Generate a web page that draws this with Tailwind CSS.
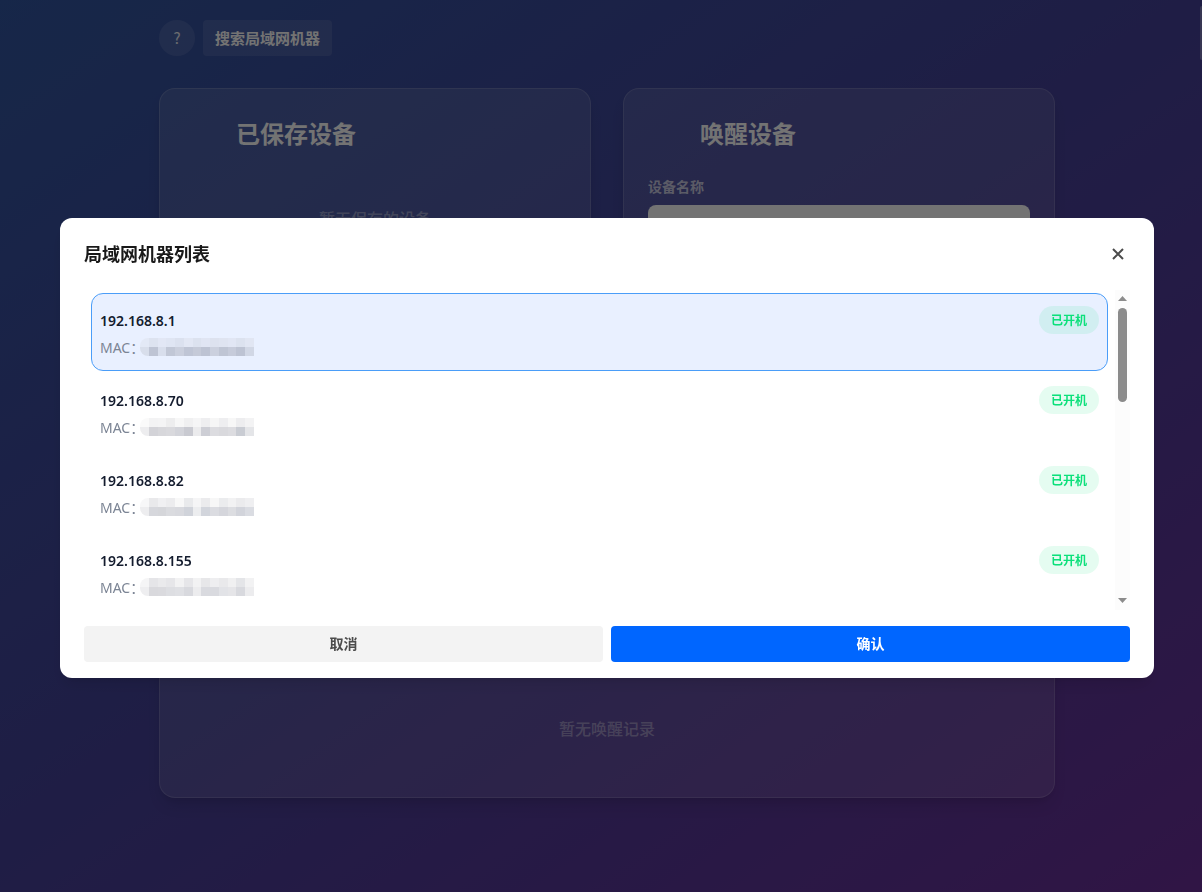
<!DOCTYPE html>
<html lang="zh-CN">
  <head>
    <meta charset="UTF-8" />
    <meta name="viewport" content="width=device-width, initial-scale=1.0" />
    <title>局域网唤醒</title>
    <script src="https://cdn.jsdelivr.net/npm/@tailwindcss/browser@4"></script>
  </head>
  <body
    class="h-screen overflow-hidden bg-linear-[145deg,#3257a2,#464199_50%,#6b2f99] font-['Noto_Sans','Noto_Sans_CJK_SC',sans-serif]"
  >
    <!-- Page -->
    <div class="pl-3 pt-5">
      <div class="max-w-4xl mx-auto">
        <header class="flex gap-2 mb-8">
          <button
            class="size-9 rounded-full bg-white/10 text-white/90 text-[15px] font-['Noto_Sans_CJK_SC',sans-serif]"
            aria-label="帮助"
          >
            ?
          </button>
          <button
            class="h-9 px-3 rounded bg-white/10 text-white text-[15px] font-bold"
          >
            搜索局域网机器
          </button>
        </header>

        <main>
          <div class="grid grid-cols-2 gap-8 mb-8">
            <section
              class="h-[360px] p-6 rounded-2xl border border-white/15 bg-white/10 shadow-lg"
            >
              <h2 class="px-[52px] pt-[3px] pb-[5px] text-2xl leading-9 font-bold text-white">
                已保存设备
              </h2>
              <p class="mt-[50px] text-center font-medium text-white/40">暂无保存的设备</p>
            </section>

            <section
              class="h-[360px] p-6 rounded-2xl border border-white/15 bg-white/10 shadow-lg"
            >
              <h2 class="px-[52px] pt-[3px] pb-[5px] text-2xl leading-9 font-bold text-white">
                唤醒设备
              </h2>
              <label
                for="deviceName"
                class="block mt-5 mb-2 text-sm font-bold text-white/70"
                >设备名称</label
              >
              <input
                id="deviceName"
                type="text"
                class="block w-full h-11 px-3 rounded-lg border border-white/80 bg-white"
              />
            </section>
          </div>

          <section
            class="h-[318px] p-6 rounded-2xl border border-white/15 bg-white/10 shadow-lg flex flex-col"
          >
            <h2 class="px-[52px] pt-[3px] pb-[5px] text-2xl leading-9 font-bold text-white">
              唤醒记录
            </h2>
            <p class="mt-auto mb-8 text-center font-medium text-white/40">暂无唤醒记录</p>
          </section>
        </main>
      </div>
    </div>

    <!-- Page scroll thumb -->
    <div class="fixed top-[6px] right-0 w-[2px] h-[54px] rounded-l-full bg-white/30"></div>

    <!-- Machine list dialog -->
    <div class="fixed inset-0 bg-black/55 pt-[218px] pl-[60px] pr-12">
      <div
        role="dialog"
        aria-labelledby="dialogTitle"
        class="rounded-xl bg-white px-6 pb-4 shadow-lg"
      >
        <div class="flex items-center justify-between h-[72px]">
          <h3 id="dialogTitle" class="text-lg font-bold text-black/90">
            局域网机器列表
          </h3>
          <button
            class="size-6 flex items-center justify-center text-[#4b4b4b]"
            aria-label="关闭"
          >
            <svg
              class="size-3"
              viewBox="0 0 12 12"
              fill="none"
              stroke="currentColor"
              stroke-width="2"
            >
              <path d="M1 1l10 10M11 1L1 11" />
            </svg>
          </button>
        </div>

        <div class="flex h-80">
          <ul id="machineList" class="flex-1 px-[7px] pt-[3px] overflow-hidden"></ul>

          <!-- Scrollbar -->
          <div class="w-[15px] bg-[#fcfcfc] flex flex-col items-center pt-[6px] pb-[7px]">
            <svg class="w-[9px] h-[5px] shrink-0" viewBox="0 0 9 5" fill="#8b8b8b">
              <path d="M4.5 0L9 5H0z" />
            </svg>
            <div class="w-[9px] h-[94px] mt-[7px] rounded-full bg-[#8b8b8b]"></div>
            <svg
              class="w-[9px] h-[5px] mt-auto shrink-0"
              viewBox="0 0 9 5"
              fill="#8b8b8b"
            >
              <path d="M0 0H9L4.5 5z" />
            </svg>
          </div>
        </div>

        <div class="flex gap-2 mt-4">
          <button
            class="flex-1 h-9 rounded bg-[#f3f3f3] text-sm font-bold text-[#4b4b4b]"
          >
            取消
          </button>
          <button
            class="flex-1 h-9 rounded bg-[#0066ff] text-sm font-bold text-white"
          >
            确认
          </button>
        </div>
      </div>
    </div>

    <script>
      const machines = [
        {
          ip: '192.168.8.1',
          selected: true,
          mask: [
            ['#e3e9f6', '#dde3f0', '#e2e7f5', '#dfe5f3', '#dbe1ef', '#e2e7f4', '#dce2ef', '#e0e5f3', '#dde2ef', '#dfe4f1', '#e1e6f4', '#dce2ef', '#e1e6f3'],
            ['#d8deeb', '#bec4d4', '#d8deec', '#c1c7d6', '#cacfdd', '#bfc5d5', '#c5cad8', '#bdc3d3', '#cbd0de', '#bfc5d4', '#c6cbda', '#bdc3d3', '#d1d7e5'],
          ],
        },
        {
          ip: '192.168.8.70',
          mask: [
            ['#fafafa', '#f3f3f4', '#f4f4f5', '#ededee', '#f7f7f7', '#f0f0f1', '#f5f5f6', '#eeeef0', '#f6f6f6', '#eeeef0', '#f7f7f7', '#ededef', '#f3f3f4'],
            ['#ededef', '#d3d3d8', '#d7d7db', '#d9d9dd', '#d3d4da', '#c9cad1', '#ebebed', '#cdced5', '#dcdce0', '#d9d9dd', '#dcdce0', '#c9ccd3', '#e4e5e8'],
          ],
        },
        {
          ip: '192.168.8.82',
          mask: [
            ['#f7f7f8', '#e9e9eb', '#f0f0f2', '#ececee', '#f8f8f8', '#e9eaec', '#f5f5f6', '#ebebed', '#f7f7f7', '#ebecee', '#f2f2f3', '#ebebed', '#efeff1'],
            ['#ededef', '#d6d7dc', '#d5d6da', '#dadbdf', '#d8d9de', '#d0d3da', '#ecedef', '#d2d5dc', '#dbdce1', '#d5d6dc', '#dcdde1', '#d2d4db', '#dadce2'],
          ],
        },
        {
          ip: '192.168.8.155',
          mask: [
            ['#f5f5f6', '#e5e5e8', '#eaeaec', '#e6e6e9', '#f2f2f3', '#e6e6e9', '#f2f2f3', '#e7e7e9', '#eeeef0', '#e9e9eb', '#f0f0f1', '#e4e5e8', '#f2f2f3'],
            ['#eeeef0', '#d9d9dd', '#dadade', '#dddee2', '#dfe0e4', '#d8d9de', '#ececee', '#d9dadf', '#d9dadf', '#e2e3e7', '#e5e5e8', '#d8d9de', '#ececee'],
          ],
        },
      ];

      const list = document.getElementById('machineList');

      machines.forEach((machine) => {
        const state = machine.selected
          ? 'bg-[#e9f0ff] border-[#4a9df8]'
          : 'border-transparent';
        const cells = machine.mask
          .flat()
          .map((color) => `<i style="background:${color}"></i>`)
          .join('');

        list.innerHTML += `
          <li class="flex items-start justify-between h-[78px] mb-[2px] px-2 py-3 rounded-xl border ${state}">
            <div>
              <div class="h-7 pt-px text-sm leading-7 font-semibold text-[#141c2e]">${machine.ip}</div>
              <div class="flex items-center h-7 text-sm text-[#7b8494]">
                <span class="w-10">MAC：</span>
                <span class="grid grid-cols-13 grid-rows-2 w-[114px] h-[18px] mb-[2px] rounded-l-lg overflow-hidden">${cells}</span>
              </div>
            </div>
            <span class="h-7 px-3 pt-px rounded-full bg-[#00e676]/10 text-xs leading-7 font-bold text-[#0be07b]">已开机</span>
          </li>`;
      });
    </script>
  </body>
</html>
